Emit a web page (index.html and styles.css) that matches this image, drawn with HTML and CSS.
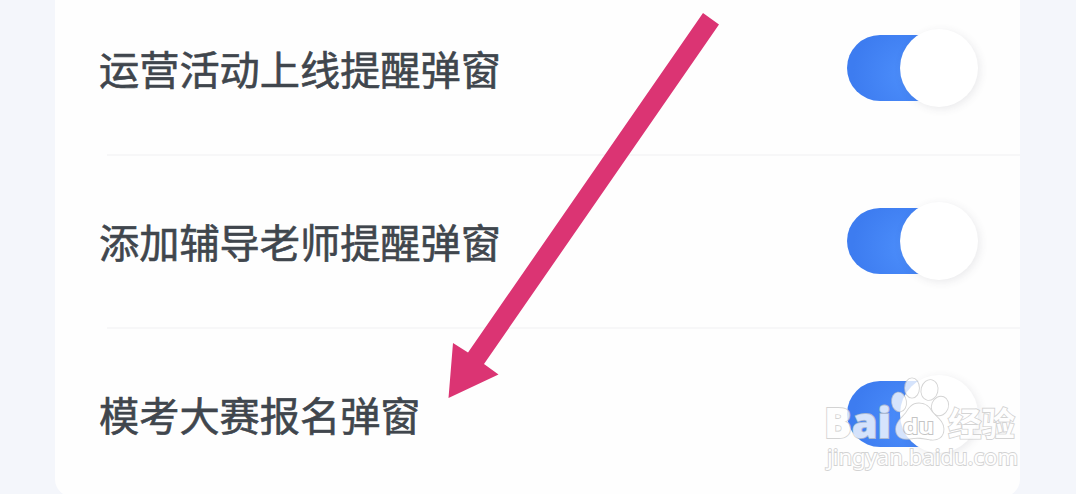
FILE: index.html
```html
<!DOCTYPE html>
<html lang="zh-CN">
<head>
    <meta charset="UTF-8">
    <meta name="viewport" content="width=device-width, initial-scale=1.0">
    <title>弹窗设置</title>
    <link rel="stylesheet" href="styles.css">
</head>
<body>
    <main class="settings-card">
        <div class="setting-row">
            <span class="setting-label">运营活动上线提醒弹窗</span>
            <div class="toggle" role="switch" aria-checked="true"><span class="toggle-track"></span><span class="toggle-knob"></span></div>
        </div>
        <div class="setting-row">
            <span class="setting-label">添加辅导老师提醒弹窗</span>
            <div class="toggle" role="switch" aria-checked="true"><span class="toggle-track"></span><span class="toggle-knob"></span></div>
        </div>
        <div class="setting-row">
            <span class="setting-label">模考大赛报名弹窗</span>
            <div class="toggle" role="switch" aria-checked="true"><span class="toggle-track"></span><span class="toggle-knob"></span></div>
        </div>
    </main>

    <svg class="overlay" viewBox="0 0 1076 494">
        <!-- flecha -->
        <path class="arrow" d="M703 13L719 24.500L484 364L498.500 374.500L448.500 398L453 343L468 352.500Z"/>

        <!-- marca de agua -->
        <g class="watermark">
            <text class="mark-latin" x="824" y="438" textLength="67" lengthAdjust="spacingAndGlyphs">Bai</text>
            <ellipse cx="899" cy="402" rx="7" ry="9.500" transform="rotate(-8 899 402)"/>
            <ellipse cx="912" cy="388" rx="7" ry="9.700"/>
            <ellipse cx="929.500" cy="390" rx="8" ry="10" transform="rotate(14 929.500 390)"/>
            <ellipse cx="940" cy="406" rx="8" ry="9.500" transform="rotate(22 940 406)"/>
            <path d="M919 403.500C926 403.500 929 407 932 412C936 417 943.500 421 943.500 429C943.500 437 938 440.500 930 439.500C922 437.500 917 437 910 438.500C902 440 896 437 896 429C896 422 902 418 906 413C909 408 912 403.500 919 403.500Z"/>
            <text class="mark-du" x="903" y="434" textLength="31" lengthAdjust="spacingAndGlyphs">du</text>
            <text class="mark-cjk" x="948" y="436">经验</text>
            <text class="mark-url" x="827" y="465" textLength="191" lengthAdjust="spacingAndGlyphs">jingyan.baidu.com</text>
        </g>
    </svg>
</body>
</html>
```

FILE: styles.css
```css
:root {
    --page-bg: #f4f6fb;
    --label-color: #40464d;
    --line-color: #f7f7f8;
    --arrow-color: #db3473;
}
* {
    box-sizing: border-box;
}
body {
    margin: 0;
    height: 494px;
    overflow: hidden;
    background-color: var(--page-bg);
    font-family: "Liberation Sans", "Noto Sans CJK SC", sans-serif;
}
.settings-card {
    width: 965px;
    height: 497px;
    margin-left: 55px;
    padding-left: 44px;
    background-color: #fefefe;
    border-radius: 0 0 18px 18px;
}
.setting-row {
    display: flex;
    align-items: center;
    justify-content: space-between;
    height: 173px;
    padding-right: 41px;
    padding-bottom: 3px;
    background: linear-gradient(var(--line-color), var(--line-color)) 8px 100% / 100% 2px no-repeat;
}
.setting-row:first-child {
    height: 156px;
    padding-bottom: 20px;
}
.setting-row:last-child {
    background: none;
}
.setting-label {
    font-family: "Noto Sans CJK SC", sans-serif;
    font-size: 40.2px;
    line-height: 60px;
    color: var(--label-color);
    -webkit-text-stroke: 0.6px var(--label-color);
}
.toggle {
    display: flex;
    align-items: center;
    width: 132px;
}
.toggle-track {
    width: 92px;
    height: 66px;
    border-radius: 33px 0 0 33px;
    background: radial-gradient(circle at 65% 60%, #4c8efb, #3d7cf0 75%);
}
.toggle-knob {
    flex: none;
    width: 78px;
    height: 78px;
    margin-left: -39px;
    border-radius: 50%;
    background-color: #fff;
    box-shadow: 2px 2px 8px rgba(60, 60, 80, 0.1);
}
.overlay {
    position: absolute;
    top: 0;
    left: 0;
    width: 1076px;
    height: 494px;
}
.arrow {
    fill: var(--arrow-color);
}
.watermark {
    opacity: 0.78;
    fill: #fff;
    stroke: #c8c8c8;
    stroke-width: 1.8px;
    paint-order: stroke;
}
.mark-latin {
    font: 800 43px "Open Sans", "Noto Sans", sans-serif;
}
.mark-du {
    font: bold 21px "Noto Sans", sans-serif;
    stroke: #b4b4b4;
}
.mark-cjk {
    font: bold 33.5px "Noto Sans CJK SC", sans-serif;
}
.mark-url {
    font: 22px "Noto Sans", sans-serif;
}
```
